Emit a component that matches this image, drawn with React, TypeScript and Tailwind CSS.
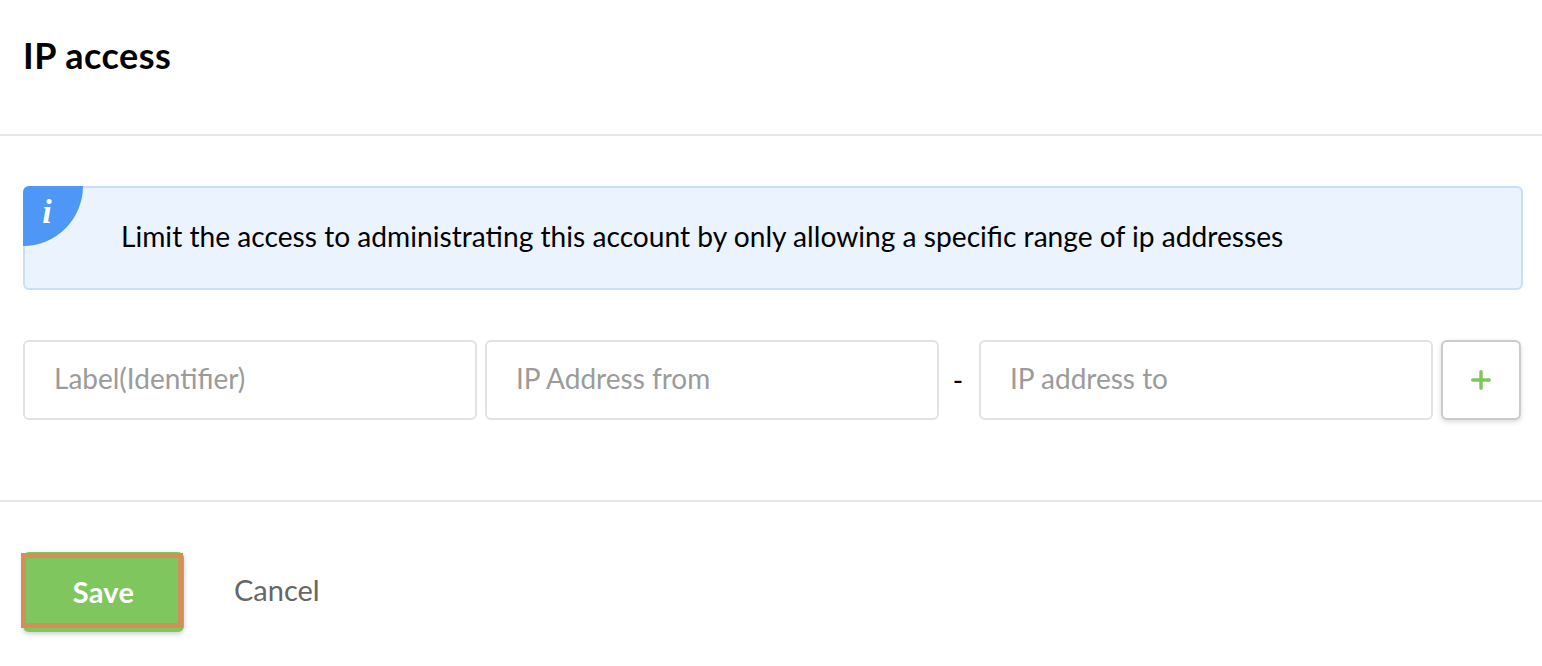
import React from 'react';

const TextField: React.FC<{ placeholder: string }> = ({ placeholder }) => (
  <div className="w-[454px] shrink-0 h-20 flex items-center pl-[29px] pb-[5px] bg-white border-2 border-[#e2e2e2] rounded-md text-[28px] text-[#9b9b9b]">
    {placeholder}
  </div>
);

export default function App() {
  return (
    <div className="w-[1542px] h-[666px] bg-white overflow-hidden text-black font-['Lato',sans-serif]">
      {/* header */}
      <div className="h-[136px] border-b-2 border-[#e6e6e6] pl-[23px] pt-[34px]">
        <h1 className="text-[36px] leading-[42px] font-bold tracking-[0.5px]">IP access</h1>
      </div>

      {/* body */}
      <div className="h-[366px] border-b-2 border-[#e6e6e6] pl-[23px] pt-[50px]">
        <div className="relative w-[1500px] h-[104px] flex items-center pl-[96px] pb-[3px] bg-[#ebf3fe] border-2 border-[#c9defb] rounded-md text-[28.17px] whitespace-nowrap">
          <div className="absolute -left-[2px] -top-[2px] w-[60px] h-[60px] bg-[#4f97f7] rounded-tl-md rounded-br-[60px] flex items-start justify-center pr-[12px] pt-[7px]">
            <span className="text-white text-[34px] leading-[38px] italic font-bold font-['Liberation_Serif',serif]">i</span>
          </div>
          Limit the access to administrating this account by only allowing a specific range of ip addresses
        </div>

        <div className="flex items-center mt-[50px]">
          <TextField placeholder="Label(Identifier)" />
          <div className="w-2 shrink-0" />
          <TextField placeholder="IP Address from" />
          <div className="w-[38px] mr-[2px] shrink-0 text-center text-[28px]">-</div>
          <TextField placeholder="IP address to" />
          <button className="ml-2 shrink-0 w-20 h-20 flex items-center justify-center bg-white border-2 border-[#cbcbcb] rounded-md shadow-[0_2px_5px_rgba(0,0,0,0.15)]">
            <svg width="20" height="20" viewBox="0 0 20 20">
              <path d="M10 1.7v16.6M1.7 10h16.6" stroke="#7ec65d" strokeWidth="3.4" strokeLinecap="round" />
            </svg>
          </button>
        </div>
      </div>

      {/* footer */}
      <div className="flex items-start pl-[23px] pt-[50px]">
        <div className="relative">
          <button className="w-[161px] h-[80px] bg-[#7ec65d] rounded-md text-white text-[29px] font-bold tracking-[0.3px] shadow-[0_2px_5px_rgba(0,0,0,0.2)]">
            Save
          </button>
          <div className="absolute -left-[2px] top-[1px] w-[162px] h-[75px] border-[5px] border-[#d29058] pointer-events-none" />
        </div>
        <button className="ml-[50px] mt-[18px] text-[29px] leading-[40px] text-[#666666]">Cancel</button>
      </div>
    </div>
  );
}
